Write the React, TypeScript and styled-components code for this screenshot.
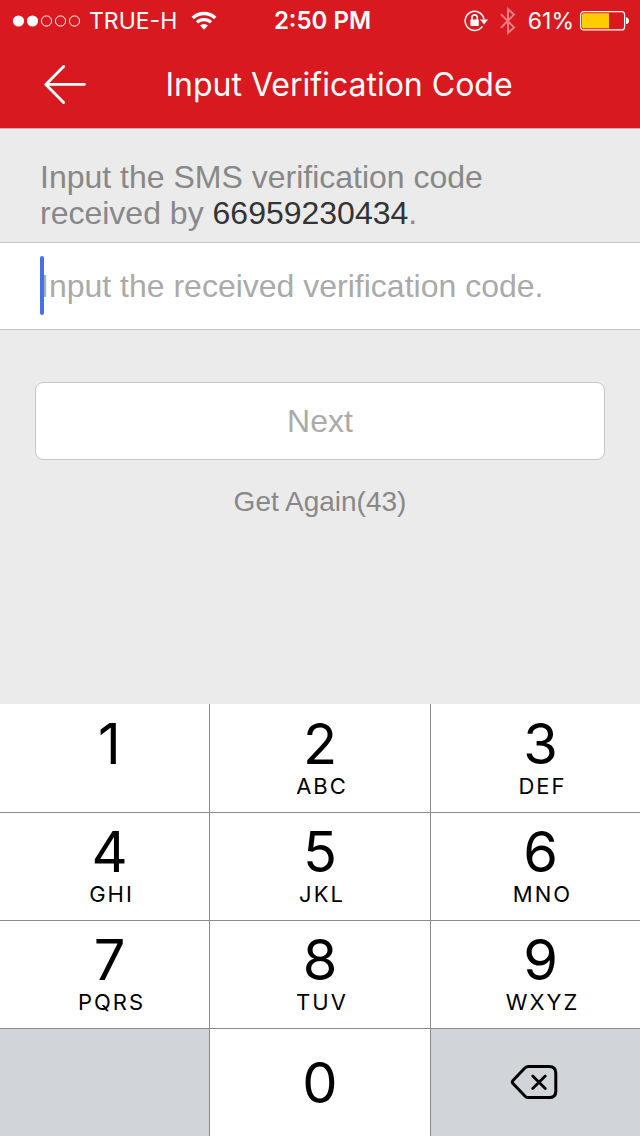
import React from "react";
import styled, { createGlobalStyle } from "styled-components";

const GlobalStyle = createGlobalStyle`
  * { box-sizing: border-box; }
  body { margin: 0; background: #ebebeb; }
  button, input { font: inherit; margin: 0; }
`;

const Page = styled.div`
  display: flex;
  flex-direction: column;
  min-height: 100vh;
  background: #ebebeb;
  font-family: "Liberation Sans", Arial, sans-serif;
`;

const Header = styled.header`
  background: #d81920;
  color: #fff;
  font-family: Inter, sans-serif;
  border-bottom: 1px solid #d4aeb0;
`;

const StatusBar = styled.div`
  display: grid;
  grid-template-columns: 1fr auto 1fr;
  align-items: center;
  height: 41px;
  padding: 0 11px 0 12px;
  font-size: 23px;
  line-height: 42px;
`;

const StatusGroup = styled.div<{ $end?: boolean }>`
  display: flex;
  align-items: center;
  justify-content: ${(p) => (p.$end ? "flex-end" : "flex-start")};
  gap: ${(p) => (p.$end ? "12px" : "8px")};
`;

const Carrier = styled.div`
  display: flex;
  align-items: center;
  gap: 14px;
`;

const Battery = styled.div`
  display: flex;
  align-items: center;
  gap: 6px;
`;

const Time = styled.time`
  padding-left: 4px;
  font-size: 24px;
  font-weight: 600;
`;

const NavBar = styled.div`
  display: grid;
  grid-template-columns: 86px 1fr 48px;
  align-items: center;
  height: 87px;
`;

const BackButton = styled.button`
  display: flex;
  justify-content: flex-end;
  padding: 0;
  border: 0;
  background: none;
  color: inherit;
`;

const Title = styled.h1`
  margin: 0;
  font-size: 32px;
  line-height: 40px;
  font-weight: 400;
  text-align: center;
`;

const Main = styled.main`
  flex: 1;
`;

const Hint = styled.label`
  display: block;
  padding: 30px 40px 10px;
  font-size: 32px;
  line-height: 36px;
  color: #888;
  max-width: 560px;
`;

const Phone = styled.span`
  color: #333;
`;

const Field = styled.div`
  position: relative;
  margin-top: 1px;
  border: solid #c3c3c3;
  border-width: 1px 0;
  background: #fff;
`;

const CodeInput = styled.input`
  display: block;
  width: 100%;
  height: 86px;
  padding: 0 40px;
  border: 0;
  outline: 0;
  background: none;
  font-size: 32px;
  color: #333;
  &::placeholder { color: #aaa; opacity: 1; }
`;

const Caret = styled.span`
  position: absolute;
  left: 40px;
  top: 13px;
  bottom: 14px;
  width: 4px;
  border-radius: 2px;
  background: #4a6ee8;
`;

const Actions = styled.div`
  display: flex;
  flex-direction: column;
  align-items: center;
  gap: 24px;
  padding: 52px 35px;
`;

const NextButton = styled.button`
  width: 100%;
  height: 78px;
  border: 1px solid #c6c6c6;
  border-radius: 8px;
  background: #fff;
  color: #aaa;
  font-size: 32px;
`;

const ResendButton = styled.button`
  padding: 0;
  border: 0;
  background: none;
  color: #888;
  font-size: 28px;
  line-height: 36px;
`;

const Keypad = styled.div`
  display: grid;
  grid-template-columns: 210fr 221fr 209fr;
  grid-auto-rows: 108px;
  background: #fff;
  font-family: Inter, sans-serif;
`;

const Key = styled.button<{ $gray?: boolean; $col: number; $first?: boolean; $single?: boolean }>`
  display: flex;
  flex-direction: column;
  align-items: center;
  justify-content: ${(p) => (p.$single ? "center" : "flex-start")};
  padding: ${(p) => (p.$single ? "0" : p.$first ? "12px" : "11px")} 0 0 ${(p) => (p.$single || p.$col === 1 ? "0" : "10px")};
  border: solid #8c8c8c;
  border-width: ${(p) => (p.$first ? "0" : "1px")} ${(p) => (p.$col < 2 ? "1px" : "0")} 0 0;
  border-radius: 0;
  background: ${(p) => (p.$gray ? "#d1d4d9" : "#fff")};
  color: #000;
`;

const Digit = styled.span`
  font-size: 56px;
  line-height: 56px;
`;

const Letters = styled.span`
  padding-left: 4px;
  font-size: 22px;
  line-height: 28px;
  letter-spacing: 2px;
`;

const DeleteGlyph = styled.span`
  display: flex;
  padding: 0 4px 2px 0;
`;

const keys: [string, string][] = [
  ["1", ""], ["2", "ABC"], ["3", "DEF"],
  ["4", "GHI"], ["5", "JKL"], ["6", "MNO"],
  ["7", "PQRS"], ["8", "TUV"], ["9", "WXYZ"],
];

const SignalIcon = () => (
  <svg width="69" height="14" viewBox="0 0 69 14" fill="none" aria-hidden="true">
    {[6, 20].map((x) => <circle key={x} cx={x + 0.5} cy="7" r="5.6" fill="#fff" />)}
    {[34, 48, 62].map((x) => <circle key={x} cx={x + 0.5} cy="7" r="5.1" stroke="#fff" />)}
  </svg>
);

const WifiIcon = () => (
  <svg width="26" height="20" viewBox="0 0 26 20" fill="none" stroke="#fff" aria-hidden="true">
    <path d="M1.8 7a16 16 0 0 1 22.4 0" strokeWidth="3.4" />
    <path d="M6 11.4a10.2 10.2 0 0 1 14 0" strokeWidth="3.2" />
    <path d="M13 18.8l-4-4.2a5.8 5.8 0 0 1 8 0z" fill="#fff" stroke="none" />
  </svg>
);

const LockIcon = () => (
  <svg width="24" height="22" viewBox="0 0 24 22" fill="none" stroke="#fff" aria-hidden="true">
    <path d="M18.4 16.4A9.5 9.5 0 1 1 20 9.3" strokeWidth="1.5" />
    <path d="M16 9.6h8L20 14.4z" fill="#fff" stroke="none" />
    <path d="M7.9 10V7.6a2.7 2.7 0 0 1 5.4 0V10" strokeWidth="1.6" />
    <rect x="6.4" y="9.4" width="8.4" height="6.6" rx="0.8" fill="#fff" stroke="none" />
  </svg>
);

const BluetoothIcon = () => (
  <svg width="16" height="28" viewBox="0 0 16 28" fill="none" stroke="#ee7c80" strokeWidth="2" aria-hidden="true">
    <path d="M1 7.2l13 13.2-6 5.4V2.2l6 5.4L1 20.8" />
  </svg>
);

const BatteryIcon = () => (
  <svg width="49" height="20" viewBox="0 0 49 20" aria-hidden="true">
    <rect x="0.6" y="0.7" width="44" height="18.2" rx="3" fill="none" stroke="#fff" strokeWidth="1.2" />
    <path d="M3.5 2.3H29v15H3.5A1.5 1.5 0 0 1 2 15.8v-12a1.5 1.5 0 0 1 1.5-1.5z" fill="#ffcc00" />
    <path d="M46 6.6h1q2 .8 2 3.2t-2 3.2h-1z" fill="#fff" />
  </svg>
);

const ArrowIcon = () => (
  <svg width="42" height="40" viewBox="0 0 42 40" fill="none" stroke="#fff" strokeWidth="2.8" strokeLinecap="round" strokeLinejoin="round" aria-hidden="true">
    <path d="M19.6 1.4L1.8 19.4l17.8 18M1.8 19.4h38.6" />
  </svg>
);

const DeleteIcon = () => (
  <svg width="48" height="36" viewBox="0 0 48 36" fill="none" stroke="#000" strokeWidth="3" strokeLinecap="round" strokeLinejoin="round" aria-hidden="true">
    <path d="M18.5 2.4H39q6.8 0 6.8 6.4v18.4q0 6.4-6.8 6.4H18.5q-2 0-3.4-1.4L3.2 19.8q-1.8-1.8 0-3.6L15.1 3.8q1.4-1.4 3.4-1.4z" />
    <path d="M22.7 12.1l12.6 12.4M35.3 12.1L22.7 24.5" strokeWidth="2.8" />
  </svg>
);

export default function App() {
  return (
    <Page>
      <GlobalStyle />
      <Header>
        <StatusBar>
          <StatusGroup>
            <SignalIcon />
            <Carrier>
              <span>TRUE-H</span>
              <WifiIcon />
            </Carrier>
          </StatusGroup>
          <Time>2:50 PM</Time>
          <StatusGroup $end>
            <LockIcon />
            <BluetoothIcon />
            <Battery>
              <span>61%</span>
              <BatteryIcon />
            </Battery>
          </StatusGroup>
        </StatusBar>
        <NavBar>
          <BackButton type="button" aria-label="Back"><ArrowIcon /></BackButton>
          <Title>Input Verification Code</Title>
        </NavBar>
      </Header>
      <Main>
        <Hint htmlFor="code">
          Input the SMS verification code received by <Phone>66959230434</Phone>.
        </Hint>
        <Field>
          <CodeInput id="code" type="text" inputMode="numeric" placeholder="Input the received verification code." />
          <Caret />
        </Field>
        <Actions>
          <NextButton type="button" disabled>Next</NextButton>
          <ResendButton type="button" disabled>Get Again(43)</ResendButton>
        </Actions>
      </Main>
      <Keypad>
        {keys.map(([digit, letters], i) => (
          <Key key={digit} type="button" $col={i % 3} $first={i < 3}>
            <Digit>{digit}</Digit>
            {letters && <Letters>{letters}</Letters>}
          </Key>
        ))}
        <Key as="div" $gray $col={0} />
        <Key type="button" $single $col={1}><Digit>0</Digit></Key>
        <Key type="button" aria-label="Delete" $gray $single $col={2}>
          <DeleteGlyph><DeleteIcon /></DeleteGlyph>
        </Key>
      </Keypad>
    </Page>
  );
}
